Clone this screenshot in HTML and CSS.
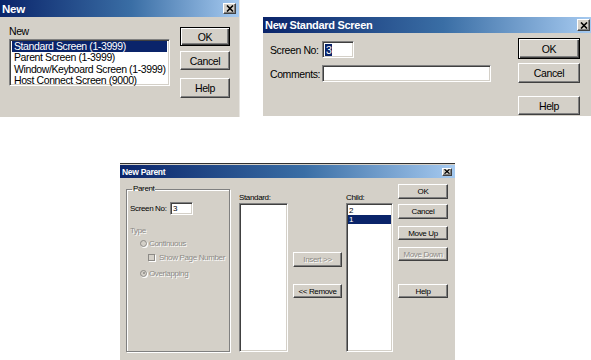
FILE: index.html
```html
<!DOCTYPE html>
<html>
<head>
<meta charset="utf-8">
<link rel="stylesheet" href="styles.css">
</head>
<body>
<div class="desk">
  <div class="row-top">
    <div class="dlg d1">
      <div class="title t1"><span>New</span>
        <span class="xbtn x1"><svg width="8" height="7" viewBox="0 0 8 7"><path d="M1 0.5 L7 6.5 M7 0.5 L1 6.5" stroke="#000" stroke-width="1.6"/></svg></span>
      </div>
      <div class="body b1">
        <div class="col1">
          <div class="lbl">New</div>
          <div class="field list1">
            <div class="item sel">Standard Screen (1-3999)</div>
            <div class="item">Parent Screen (1-3999)</div>
            <div class="item">Window/Keyboard Screen (1-3999)</div>
            <div class="item">Host Connect Screen (9000)</div>
          </div>
        </div>
        <div class="btns1">
          <button type="button" class="btn dflt h19">OK</button>
          <button type="button" class="btn h19 mt5">Cancel</button>
          <button type="button" class="btn h20 mt8">Help</button>
        </div>
      </div>
    </div>
    <div class="dlg d2">
      <div class="title t2"><span>New Standard Screen</span>
        <span class="xbtn x2"><svg width="8" height="7" viewBox="0 0 8 7"><path d="M1 0.5 L7 6.5 M7 0.5 L1 6.5" stroke="#000" stroke-width="1.6"/></svg></span>
      </div>
      <div class="body b2">
        <div class="form2">
          <span class="lbl">Screen No:</span>
          <div class="field in-no"><span class="seltext">3</span></div>
          <span class="lbl">Comments:</span>
          <div class="field in-com"></div>
        </div>
        <div class="btns2">
          <button type="button" class="btn dflt h21">OK</button>
          <button type="button" class="btn h20 mt4">Cancel</button>
          <button type="button" class="btn h19 mt13">Help</button>
        </div>
      </div>
    </div>
  </div>

  <div class="dlg d3">
    <div class="title t3"><span>New Parent</span>
      <span class="xbtn x3"><svg width="6" height="5" viewBox="0 0 6 5"><path d="M0.5 0.3 L5.5 4.7 M5.5 0.3 L0.5 4.7" stroke="#000" stroke-width="1.3"/></svg></span>
    </div>
    <div class="body b3">
      <fieldset class="group">
        <legend>Parent</legend>
        <div class="row-no">
          <span>Screen No:</span>
          <div class="field in-no3">3</div>
        </div>
        <div class="dis type">Type</div>
        <div class="opt dis"><span class="radio"></span>Continuous</div>
        <div class="opt dis sub"><span class="check"></span>Show Page Number</div>
        <div class="opt dis opt-last"><span class="radio on"></span>Overlapping</div>
      </fieldset>
      <div class="col-std">
        <div class="lbl3">Standard:</div>
        <div class="field list3"></div>
      </div>
      <div class="col-mid">
        <button type="button" class="btn h15 dis">Insert &gt;&gt;</button>
        <button type="button" class="btn h14 mt17">&lt;&lt; Remove</button>
      </div>
      <div class="col-child">
        <div class="lbl3">Child:</div>
        <div class="field list3 child">
          <div class="item3">2</div>
          <div class="item3 sel">1</div>
        </div>
      </div>
      <div class="btns3">
        <button type="button" class="btn h15">OK</button>
        <button type="button" class="btn h15 mt5">Cancel</button>
        <button type="button" class="btn h14 mt7">Move Up</button>
        <button type="button" class="btn h14 mt7 dis">Move Down</button>
        <button type="button" class="btn h14 mt23">Help</button>
      </div>
    </div>
  </div>
</div>
</body>
</html>
```

FILE: styles.css
```css
* { box-sizing: border-box; }
html, body { margin: 0; padding: 0; background: #fff; }
body { width: 591px; height: 360px; overflow: hidden; }

.desk { font-family: "Liberation Sans", Arial, sans-serif; color: #000; }

.row-top { display: flex; align-items: flex-start; }

.dlg { background: #d4d0c8; display: flex; flex-direction: column; }

.d1 { width: 240px; height: 117px; font-size: 10.5px; letter-spacing: -0.4px; border-right: 1px solid #e8e6e2; }
.d2 { width: 328px; height: 99px; margin-left: 23px; margin-top: 17px; font-size: 10.5px; letter-spacing: -0.4px; }
.d3 { width: 335px; height: 197px; margin-left: 120px; margin-top: 46px; font-size: 8px; letter-spacing: -0.35px; border-top: 1px solid #303030; padding-top: 1px; }

.title {
  display: flex; align-items: center; justify-content: space-between;
  background: linear-gradient(to right, #0a246a 0%, #3a6ea5 55%, #a6caf0 100%);
  color: #fff; font-weight: bold; flex: none;
}
.t1 { height: 17px; padding: 0 3px 0 2px; font-size: 11.5px; letter-spacing: -0.2px; }
.t2 { height: 16px; padding: 0 1px 0 2px; font-size: 11px; letter-spacing: -0.3px; }
.t3 { height: 13px; padding: 0 3px 0 2px; font-size: 8.5px; letter-spacing: -0.3px; }

.xbtn {
  display: flex; align-items: center; justify-content: center;
  background: #d4d0c8;
  border: 1px solid; border-color: #fff #404040 #404040 #fff;
  box-shadow: inset -1px -1px #808080;
}
.x1 { width: 13px; height: 11px; }
.x2 { width: 13px; height: 12px; }
.x3 { width: 10px; height: 8px; }

.body { flex: 1; display: flex; align-items: flex-start; }

.btn {
  display: flex; align-items: center; justify-content: center;
  width: 100%; padding: 0; margin: 0;
  font: inherit; letter-spacing: inherit; color: #000;
  background: #d4d0c8;
  border: 1px solid; border-color: #fff #404040 #404040 #fff;
  box-shadow: inset -1px -1px #808080;
}
.btn.dflt {
  border-color: #000;
  box-shadow: inset 1px 1px #fff, inset -1px -1px #404040, inset -2px -2px #808080;
}
.h14 { height: 14px; } .h15 { height: 15px; } .h19 { height: 19px; }
.h20 { height: 20px; } .h21 { height: 21px; }
.mt4 { margin-top: 4px; } .mt5 { margin-top: 5px; } .mt7 { margin-top: 7px; }
.mt8 { margin-top: 8px; } .mt13 { margin-top: 13px; } .mt17 { margin-top: 17px; }
.mt23 { margin-top: 23px; }

.field {
  background: #fff;
  border: 1px solid; border-color: #808080 #fff #fff #808080;
  box-shadow: inset 1px 1px #404040, inset -1px -1px #d4d0c8;
}

.dis { color: #8c8a86; text-shadow: 1px 1px 0 #fff; }

/* dialog 1 */
.col1 { padding: 8px 0 0 9px; width: 170px; }
.col1 .lbl { line-height: 12px; height: 12px; margin-bottom: 2px; }
.list1 { width: 161px; height: 47px; padding: 1px 2px; }
.item { line-height: 11.25px; padding-left: 2px; white-space: nowrap; }
.item.sel { background: #0a246a; color: #fff; }
.btns1 { margin-left: 10px; padding-top: 10px; width: 50px; display: flex; flex-direction: column; }

/* dialog 2 */
.form2 {
  display: grid; grid-template-columns: 52px auto; row-gap: 7px;
  align-items: center; padding: 8px 0 0 7px;
}
.in-no { width: 32px; height: 17px; padding: 2px 0 0 2px; line-height: 12px; }
.seltext { background: #0a246a; color: #fff; padding: 0 1px; }
.in-com { width: 169px; height: 17px; }
.btns2 { margin-left: auto; margin-right: 11px; padding-top: 5px; width: 62px; display: flex; flex-direction: column; }

/* dialog 3 */
.group {
  margin: 6px 0 0 6px; padding: 0 0 0 3px;
  width: 104px; height: 168px;
  border: 1px solid #808080;
  box-shadow: inset 1px 1px #fff, 1px 1px 0 #fff;
  min-width: 0;
}
.group legend { padding: 0 1px; margin-left: 2px; line-height: 10px; }
.row-no { display: flex; align-items: center; margin-top: 8px; height: 13px; }
.row-no span { width: 40px; }
.in-no3 { width: 23px; height: 13px; padding: 1px 0 0 2px; line-height: 10px; }
.type { margin-top: 11px; line-height: 10px; }
.opt { display: flex; align-items: center; height: 10px; margin-top: 2px; padding-left: 10px; }
.opt.sub { padding-left: 18px; margin-top: 4px; }
.opt-last { margin-top: 6px; }
.radio {
  width: 7px; height: 7px; border-radius: 50%; margin-right: 2px;
  border: 1px solid #8c8a86; background: #d4d0c8;
  box-shadow: 1px 1px 0 #fff; position: relative; flex: none;
}
.radio.on::after {
  content: ""; position: absolute; left: 1.5px; top: 1.5px;
  width: 2px; height: 2px; border-radius: 50%; background: #8c8a86;
}
.check {
  width: 7px; height: 7px; margin-right: 4px; flex: none;
  border: 1px solid #8c8a86; background: #d4d0c8; box-shadow: 1px 1px 0 #fff;
}

.col-std { margin-left: 9px; padding-top: 15px; width: 49px; }
.lbl3 { line-height: 10px; height: 10px; }
.list3 { width: 49px; height: 149px; }
.col-mid { margin-left: 5px; padding-top: 74px; width: 49px; display: flex; flex-direction: column; }
.col-child { margin-left: 4px; padding-top: 15px; width: 47px; }
.list3.child { width: 47px; padding: 2px 1px; }
.item3 { line-height: 9px; padding-left: 1px; }
.item3.sel { background: #0a246a; color: #fff; }
.btns3 { margin-left: 5px; padding-top: 6px; width: 50px; display: flex; flex-direction: column; }
```
